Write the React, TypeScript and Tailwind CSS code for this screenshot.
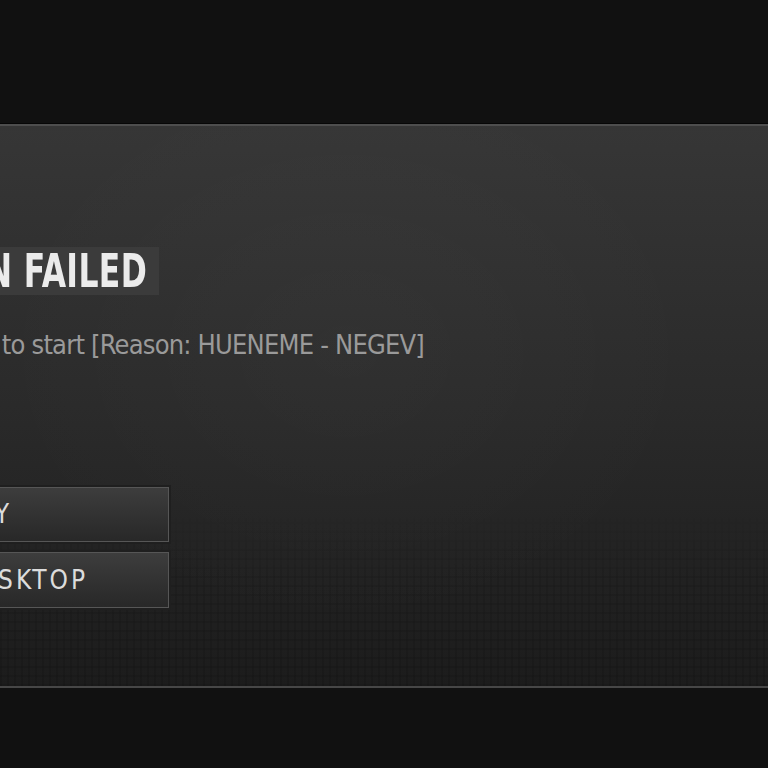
import React from "react";

const font = {
  fontFamily: '"DejaVu Sans Condensed", "DejaVu Sans", sans-serif',
};

const ErrorDialog: React.FC = () => {
  return (
    <div className="h-[768px] w-[768px] overflow-hidden bg-[#111111] pt-[123px]" style={font}>
      <div className="h-px bg-[#070707]" />
      {/* Panel */}
      <div className="relative h-[564px] border-t-2 border-b-2 border-t-[#4e4e4e] border-b-[#474747] bg-linear-to-b from-[#363636] via-[#2a2a2a] to-[#1c1c1c]">
        <div className="absolute inset-0 bg-[radial-gradient(ellipse_at_45%_40%,rgba(255,255,255,0.025),transparent_60%)]" />
        {/* scanline texture near the bottom */}
        <div className="absolute inset-x-0 bottom-0 h-[170px] bg-[repeating-linear-gradient(90deg,rgba(0,0,0,0.08)_0px,rgba(0,0,0,0.08)_2px,transparent_2px,transparent_7px),repeating-linear-gradient(0deg,rgba(0,0,0,0.07)_0px,rgba(0,0,0,0.07)_2px,transparent_2px,transparent_9px)] [mask-image:linear-gradient(to_top,black_60%,transparent)]" />
        <div className="relative -ml-[360px] flex flex-col items-start pt-[121px]">
          <div className="flex h-[48px] w-[519px] items-center justify-end bg-[#3b3b3b] pr-[12px]">
            <h1 className="origin-right scale-x-[0.76] whitespace-nowrap text-[46px] font-bold leading-none tracking-[0.5px] text-[#ebebeb]">
              CONNECTION FAILED
            </h1>
          </div>
          <div className="mt-[34px] flex w-[784px] justify-end">
            <p className="whitespace-nowrap text-[27px] leading-[32px] tracking-[-0.8px] text-[#9a9a9a]">
              The application failed to start [Reason: HUENEME - NEGEV]
            </p>
          </div>
          <div className="mt-[126px] flex flex-col gap-[10px]">
            <button className="flex h-[55px] w-[529px] items-center justify-end border border-[#565656] bg-linear-to-b from-[#3d3d3d] to-[#282828] pr-[156px] text-[26px] tracking-[3px] text-[#dcdcdc] shadow-[0_0_0_2px_#1f1f1f]">
              RETRY
            </button>
            <button className="flex h-[56px] w-[529px] items-center justify-end border border-[#565656] bg-linear-to-b from-[#3d3d3d] to-[#282828] pr-[80px] text-[26px] tracking-[3px] text-[#dcdcdc] shadow-[0_0_0_2px_#1f1f1f]">
              QUIT TO DESKTOP
            </button>
          </div>
        </div>
      </div>
    </div>
  );
};

export default function App() {
  return <ErrorDialog />;
}
